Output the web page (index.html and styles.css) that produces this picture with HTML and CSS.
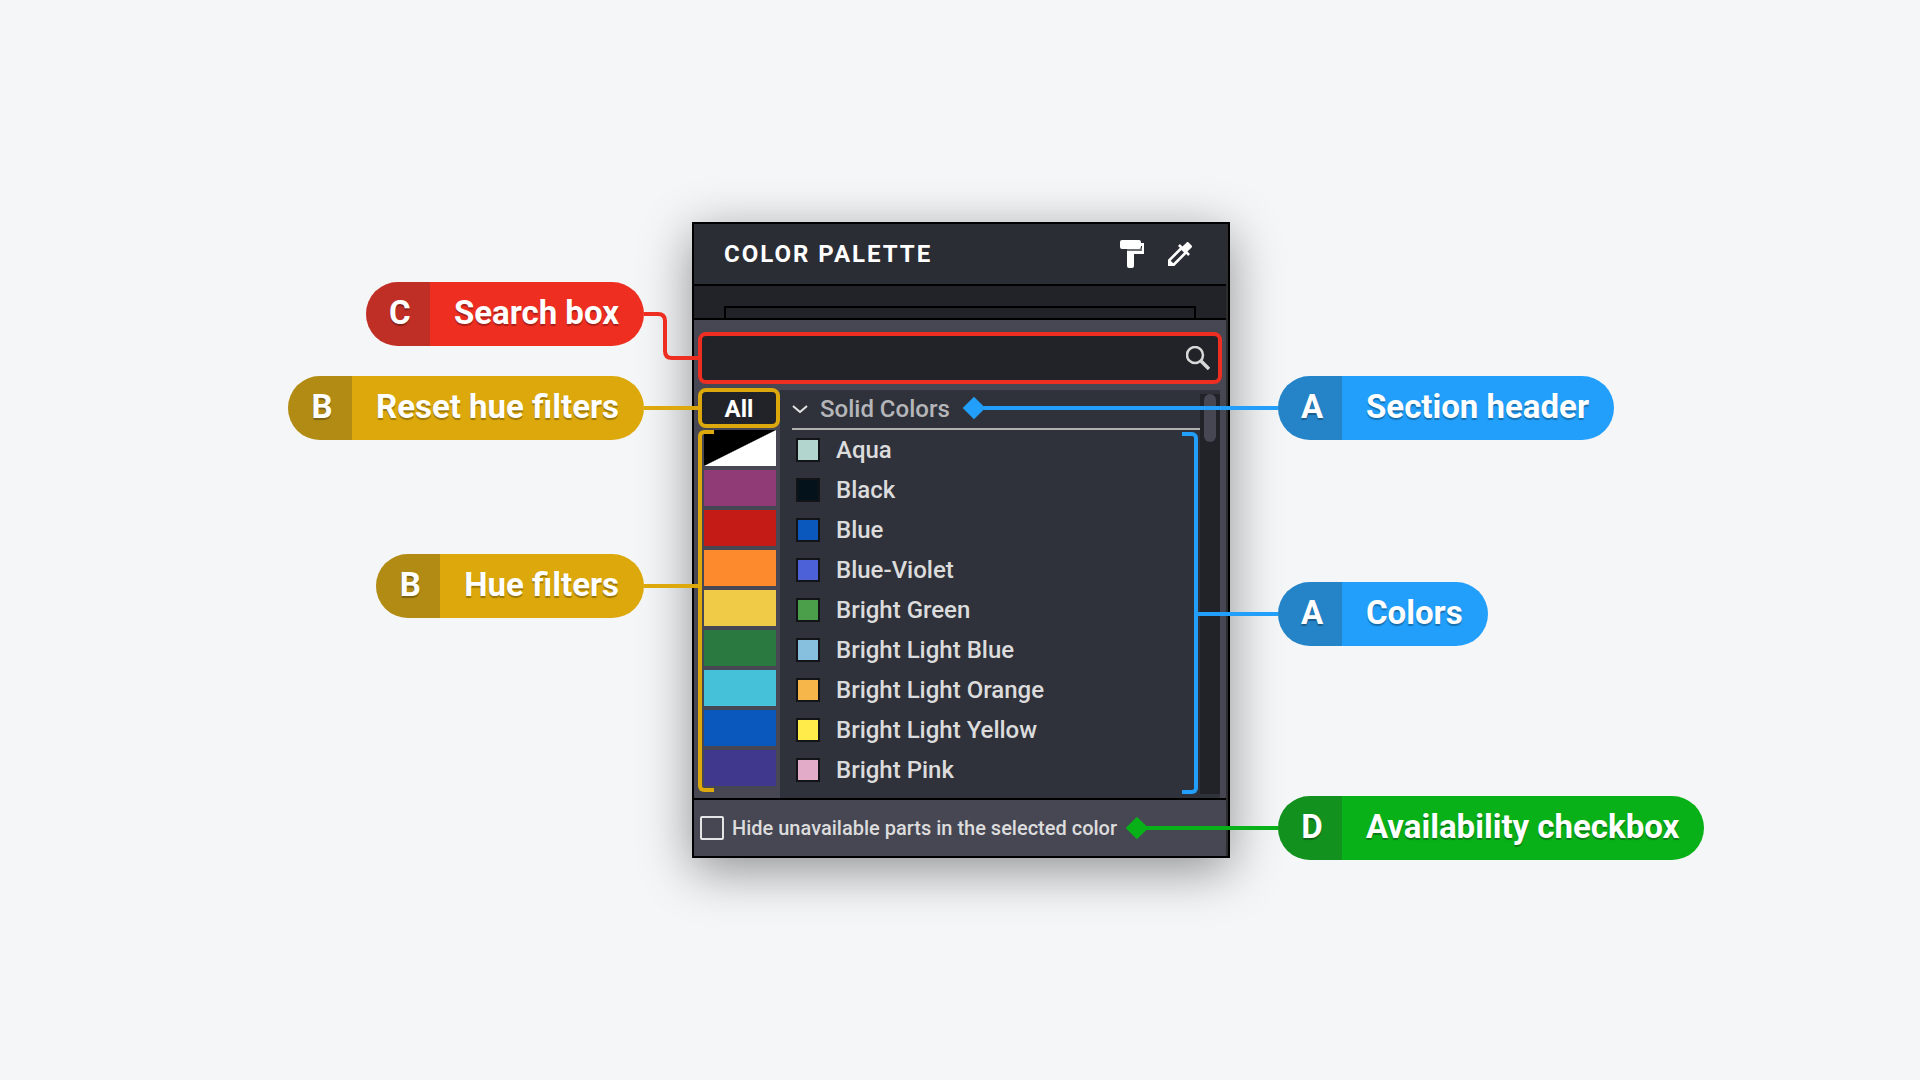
FILE: index.html
```html
<!DOCTYPE html>
<html lang="en">
<head>
  <meta charset="UTF-8">
  <meta name="viewport" content="width=device-width, initial-scale=1.0">
  <title>Color Palette</title>
  <link rel="stylesheet" href="styles.css">
</head>
<body>
  <main class="guide">

    <div class="callouts left">
      <div class="callout red">
        <span class="letter">C</span><span class="label">Search box</span>
        <svg class="elbow" width="58" height="52" viewBox="0 0 58 52" fill="none" stroke="currentColor" stroke-width="4">
          <path d="M0 4h14q7 0 7 7v30q0 7 7 7h30"/>
        </svg>
      </div>
      <div class="callout gold">
        <span class="letter">B</span><span class="label">Reset hue filters</span>
        <i class="line"></i>
      </div>
      <div class="callout gold hues">
        <span class="letter">B</span><span class="label">Hue filters</span>
        <i class="line"></i>
      </div>
    </div>

    <section class="panel">
      <header class="panel-header">
        <h1>COLOR PALETTE</h1>
        <button class="tool" aria-label="Paint">
          <svg width="24" height="28" viewBox="0 0 24 28">
            <path fill="#6d6e74" d="M7 8h15v4H7z"/>
            <path fill="#fff" d="M2 0h17q2 0 2 3h3v11H14v12q0 2-2 2H9q-2 0-2-2V11h15V6h-1q0 3-2 3H2Q0 9 0 7V2q0-2 2-2z"/>
          </svg>
        </button>
        <button class="tool" aria-label="Pick color">
          <svg width="24" height="24" viewBox="3 3 18 18">
            <path fill="#fff" d="M20.71 5.63l-2.34-2.34c-.39-.39-1.02-.39-1.41 0l-3.12 3.12-1.93-1.91-1.41 1.41 1.42 1.42L3 16.25V21h4.75l8.92-8.92 1.42 1.42 1.41-1.41-1.92-1.92 3.12-3.12c.4-.4.4-1.03.01-1.42zM6.92 19L5 17.08l8.06-8.06 1.92 1.92L6.92 19z"/>
          </svg>
        </button>
      </header>

      <div class="preview"><div class="preview-box"></div></div>

      <div class="panel-body">
        <div class="search">
          <input type="text" aria-label="Search colors">
          <svg width="24" height="24" viewBox="0 0 24 24" fill="none" stroke="#d8d8d8">
            <circle cx="9" cy="9" r="8" stroke-width="2.5"/>
            <path d="M15 15l8 8" stroke-width="3.5"/>
          </svg>
        </div>

        <div class="columns">
          <div class="filters">
            <button class="all">All</button>
            <div class="hue-list">
              <button class="hue mono" aria-label="Black and white"></button>
              <button class="hue purple" aria-label="Purple"></button>
              <button class="hue crimson" aria-label="Red"></button>
              <button class="hue orange" aria-label="Orange"></button>
              <button class="hue yellow" aria-label="Yellow"></button>
              <button class="hue green" aria-label="Green"></button>
              <button class="hue cyan" aria-label="Cyan"></button>
              <button class="hue blue" aria-label="Blue"></button>
              <button class="hue indigo" aria-label="Indigo"></button>
            </div>
          </div>

          <div class="list">
            <div class="list-content">
              <button class="section-header">
                <svg width="16" height="8" viewBox="0 0 16 8" fill="none" stroke="#e4e4e4" stroke-width="2">
                  <path d="M1 1l7 6 7-6"/>
                </svg>
                Solid Colors
              </button>
              <ul class="colors">
                <li><span class="swatch aqua"></span>Aqua</li>
                <li><span class="swatch black"></span>Black</li>
                <li><span class="swatch blue"></span>Blue</li>
                <li><span class="swatch blue-violet"></span>Blue-Violet</li>
                <li><span class="swatch bright-green"></span>Bright Green</li>
                <li><span class="swatch light-blue"></span>Bright Light Blue</li>
                <li><span class="swatch light-orange"></span>Bright Light Orange</li>
                <li><span class="swatch light-yellow"></span>Bright Light Yellow</li>
                <li><span class="swatch pink"></span>Bright Pink</li>
              </ul>
            </div>
            <div class="scrollbar"><div class="thumb"></div></div>
          </div>
        </div>
      </div>

      <footer class="panel-footer">
        <input type="checkbox" id="hide">
        <label for="hide">Hide unavailable parts in the selected color</label>
      </footer>
    </section>

    <div class="callouts right">
      <div class="callout azure section">
        <i class="line"></i>
        <span class="letter">A</span><span class="label">Section header</span>
      </div>
      <div class="callout azure">
        <i class="line"></i>
        <span class="letter">A</span><span class="label">Colors</span>
      </div>
      <div class="callout lime">
        <i class="line"></i>
        <span class="letter">D</span><span class="label">Availability checkbox</span>
      </div>
    </div>

  </main>
</body>
</html>
```
FILE: styles.css
```css
* {
  margin: 0;
  padding: 0;
  box-sizing: border-box;
}

body {
  font-family: Roboto, sans-serif;
  background: #f5f6f8;
  color: #dcdcdd;
}

button {
  font: inherit;
  color: inherit;
  background: none;
  border: none;
  cursor: pointer;
}

svg {
  display: block;
}

.guide {
  min-height: 100vh;
  padding-left: 2px;
  display: grid;
  grid-template-columns: 1fr 538px 1fr;
  align-content: center;
}

/* callouts */
.callouts {
  display: flex;
  flex-direction: column;
  position: relative;
  z-index: 1;
}

.callouts.left {
  align-items: flex-end;
  padding: 60px 48px 0 0;
  gap: 30px;
}

.callouts.right {
  align-items: flex-start;
  padding: 154px 0 0 48px;
  margin-bottom: -2px;
  gap: 142px;
}

.callout {
  display: flex;
  position: relative;
  height: 64px;
  line-height: 62px;
  border-radius: 32px;
  font-size: 33px;
  font-weight: 700;
  white-space: nowrap;
  background: currentColor;
}

.callout .letter,
.callout .label {
  color: #fff;
  text-shadow: 0 2px 1px rgba(0,0,0,0.3);
}

.letter {
  width: 64px;
  padding-left: 4px;
  text-align: center;
  background: rgba(50,50,50,0.25);
  border-radius: 32px 0 0 32px;
}

.label {
  padding: 0 25px 0 24px;
}

.callout.hues {
  margin-top: 84px;
}

.callout.lime {
  margin-top: 8px;
}

.red { color: #ef2e22; }
.gold { color: #dca80b; }
.azure { color: #219ffa; }
.lime { color: #09b119; }

/* connector lines, drawn over the panel */
.line {
  position: absolute;
  top: 30px;
  height: 4px;
  width: 54px;
  background: currentColor;
}

.left .line {
  left: 100%;
}

.right .line {
  right: 100%;
  width: 80px;
}

.right .section .line {
  width: 304px;
}

.right .lime .line {
  width: 141px;
}

.section .line::before,
.lime .line::before {
  content: "";
  position: absolute;
  left: -8px;
  top: -6px;
  width: 16px;
  height: 16px;
  background: currentColor;
  transform: rotate(45deg);
}

.elbow {
  position: absolute;
  left: 100%;
  top: 28px;
}

/* panel */
.panel {
  border: 2px solid #000;
  padding-right: 2px;
  background: #2d2d2d;
  box-shadow: 0 12px 48px rgba(0,0,0,0.42);
}

.panel-header {
  display: flex;
  align-items: center;
  gap: 24px;
  height: 62px;
  padding: 0 34px 0 30px;
  background: #2b2d35;
  border-bottom: 2px solid #000;
}

.panel-header h1 {
  flex: 1;
  font-size: 24px;
  font-weight: 700;
  letter-spacing: 2px;
  color: #fff;
}

.preview {
  padding: 20px 30px 0;
  background: #222328;
  border-bottom: 2px solid #000;
}

.preview-box {
  height: 12px;
  border: 2px solid #000;
  border-bottom: none;
}

.panel-body {
  padding: 12px 4px 0;
  background: #464753;
}

.search {
  display: flex;
  align-items: center;
  height: 52px;
  padding-right: 8px;
  background: #222328;
  border: 4px solid #ef2e22;
  border-radius: 8px;
}

.search input {
  flex: 1;
  height: 40px;
  padding: 0 12px;
  font: inherit;
  font-size: 24px;
  color: #fff;
  background: transparent;
  border: none;
  outline: none;
}

.columns {
  display: flex;
  padding-top: 4px;
}

.filters {
  width: 82px;
}

.all {
  display: block;
  width: 82px;
  height: 40px;
  padding-top: 2px;
  font-size: 24px;
  font-weight: 700;
  color: #fff;
  background: #222328;
  border: 4px solid #dca80b;
  border-radius: 8px;
  position: relative;
}

.hue-list {
  display: flex;
  flex-direction: column;
  gap: 4px;
  margin-top: 2px;
  padding: 0 4px 4px 6px;
  position: relative;
}

.hue-list::before {
  content: "";
  position: absolute;
  left: 0;
  top: 0;
  bottom: -2px;
  width: 12px;
  border: 4px solid #dca80b;
  border-right: none;
  border-radius: 6px 0 0 6px;
}

.hue {
  height: 36px;
}

.hue.mono { background: linear-gradient(to bottom right, #000 49%, #fff 51%); }
.hue.purple { background: #903a76; }
.hue.crimson { background: #c51b16; }
.hue.orange { background: #fe8a2e; }
.hue.yellow { background: #efcb48; }
.hue.green { background: #297940; }
.hue.cyan { background: #46c1da; }
.hue.blue { background: #0a57bd; }
.hue.indigo { background: #3f388d; }

.list {
  flex: 1;
  display: flex;
  margin: 2px 2px 0 0;
  background: #30323b;
}

.list-content {
  flex: 1;
  padding-left: 12px;
  position: relative;
}

/* bracket round the color rows */
.list-content::after {
  content: "";
  position: absolute;
  right: 2px;
  top: 42px;
  bottom: 4px;
  width: 12px;
  border: 4px solid #219ffa;
  border-left: none;
  border-radius: 0 6px 6px 0;
}

.section-header {
  display: flex;
  align-items: center;
  gap: 12px;
  width: 100%;
  height: 40px;
  font-size: 24px;
  font-weight: 500;
  color: #b5b6b9;
  border-bottom: 2px solid #b0b0b1;
}

.colors {
  list-style: none;
  padding: 0 0 8px 4px;
}

.colors li {
  display: flex;
  align-items: center;
  gap: 16px;
  height: 40px;
  font-size: 24px;
  font-weight: 500;
}

.swatch {
  width: 24px;
  height: 24px;
  border: 2px solid rgba(0,0,0,0.6);
  background-clip: padding-box;
}

.swatch.aqua { background-color: #b2d6cd; }
.swatch.black { background-color: #04131b; }
.swatch.blue { background-color: #0a57bd; }
.swatch.blue-violet { background-color: #4c61d8; }
.swatch.bright-green { background-color: #4b9f4a; }
.swatch.light-blue { background-color: #87bfdf; }
.swatch.light-orange { background-color: #f7b64a; }
.swatch.light-yellow { background-color: #ffec4b; }
.swatch.pink { background-color: #e2abc7; }

.scrollbar {
  width: 20px;
  margin: 4px 0;
  padding: 0 4px;
  background: #222328;
}

.thumb {
  height: 48px;
  border-radius: 6px;
  background: #464753;
}

.panel-footer {
  display: flex;
  align-items: center;
  gap: 8px;
  height: 58px;
  padding-left: 6px;
  background: #464753;
  border-top: 2px solid #000;
}

.panel-footer input {
  appearance: none;
  width: 24px;
  height: 24px;
  border: 2px solid #e4e4e4;
  border-radius: 2px;
}

.panel-footer label {
  font-size: 20px;
  font-weight: 500;
}
```
